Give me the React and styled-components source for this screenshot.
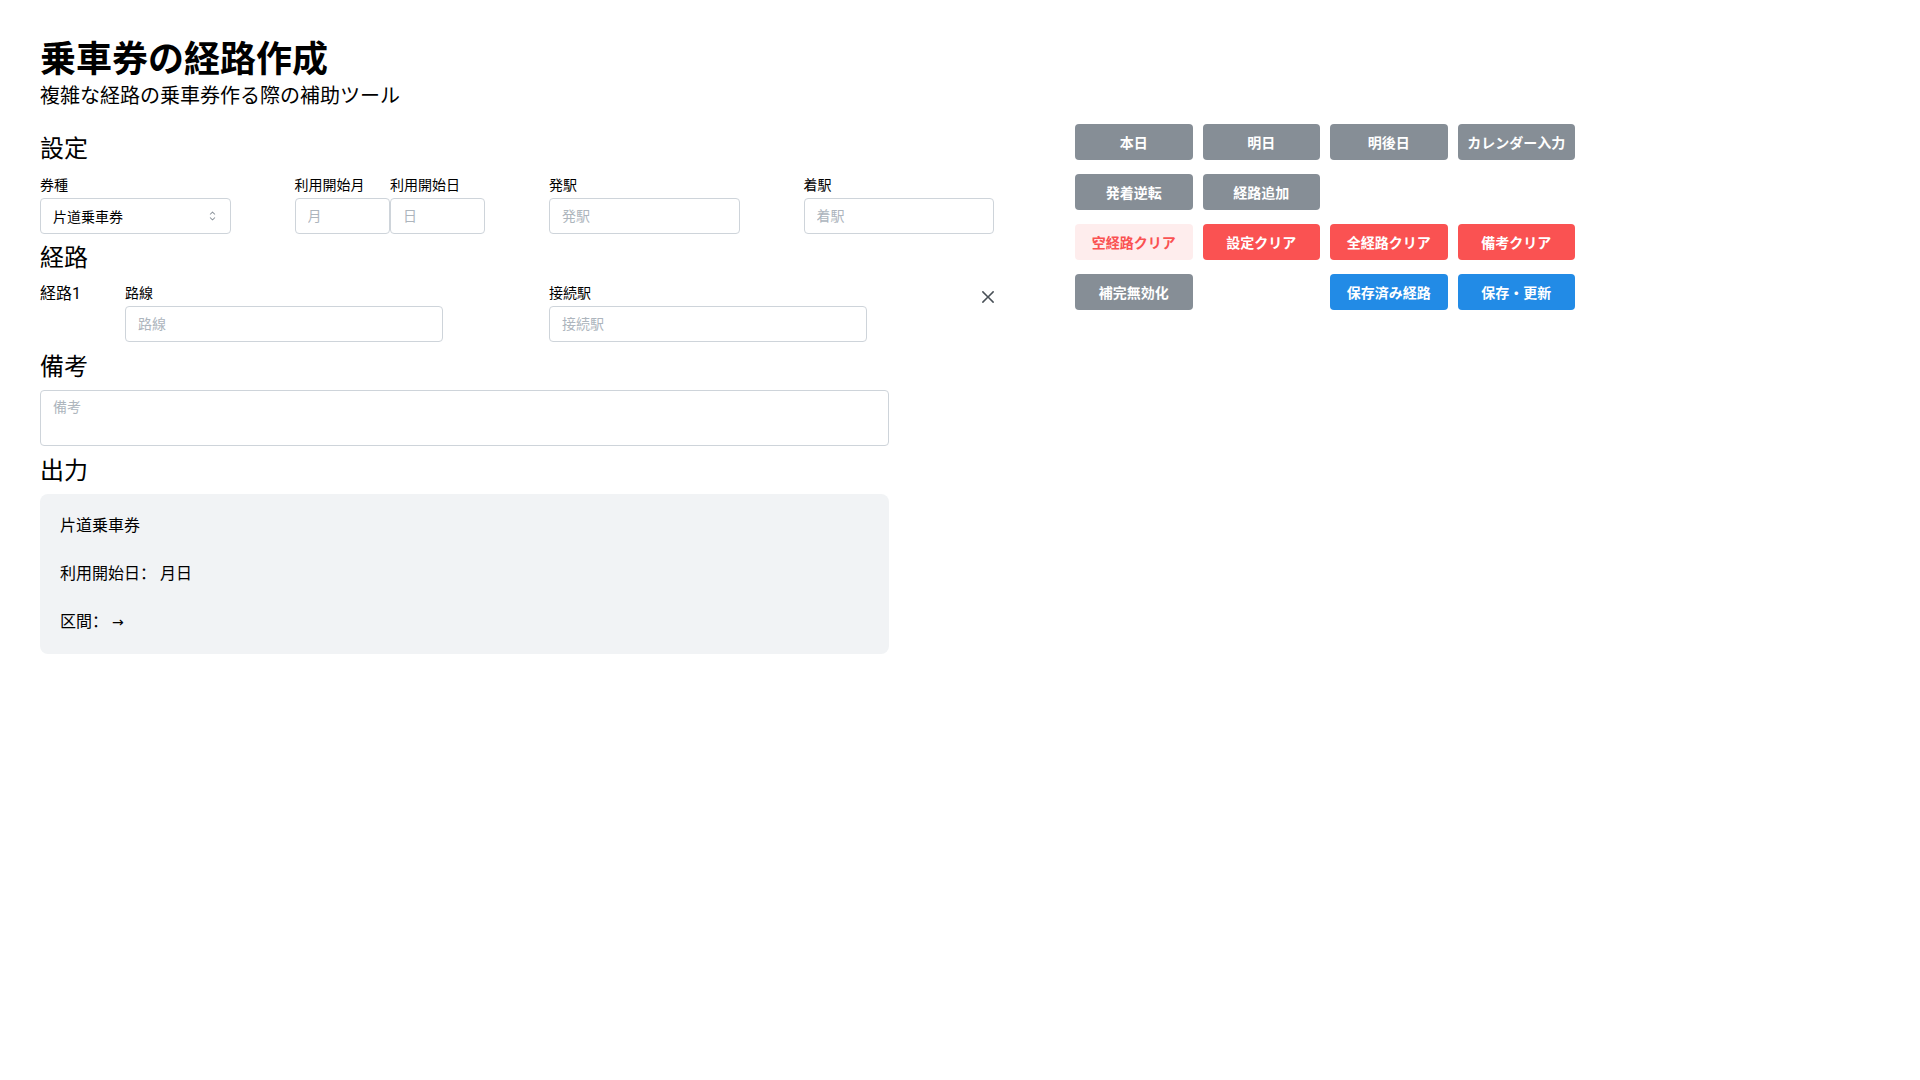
import React from "react";
import styled, { createGlobalStyle } from "styled-components";

const Global = createGlobalStyle`
  html, body { margin: 0; padding: 0; background: #fff; }
  body {
    font-family: Roboto, "Noto Sans CJK SC", "Noto Sans CJK JP", sans-serif;
    color: #000;
    -webkit-font-smoothing: antialiased;
  }
  * { box-sizing: border-box; }
`;

const Page = styled.div`
  padding: 39px 40px 40px;
`;

const Title = styled.h1`
  margin: 0;
  font-size: 36px;
  line-height: 43px;
  font-weight: 700;
`;

const Subtitle = styled.div`
  font-size: 20px;
  line-height: 28px;
`;

const Main = styled.div`
  display: flex;
  align-items: flex-start;
  margin-top: 14px;
`;

const LeftCol = styled.div`
  width: 1018px;
  flex: none;
`;

const Heading = styled.h2`
  margin: ${(p) => p.$mt || 7}px 0 ${(p) => p.$mb || 10}px;
  font-size: 24px;
  line-height: 32px;
  font-weight: 400;
`;

const SettingsGrid = styled.div`
  display: grid;
  grid-template-columns: repeat(4, 1fr);
`;

const Field = styled.div`
  width: ${(p) => p.$w || "75%"};
  display: flex;
  flex-direction: column;
`;

const DatePair = styled.div`
  width: 75%;
  display: flex;
`;

const Label = styled.label`
  font-size: 14px;
  line-height: 20px;
  font-weight: 400;
  margin-bottom: 3px;
  white-space: nowrap;
`;

const Input = styled.input`
  height: 36px;
  width: 100%;
  border: 1px solid #ced4da;
  border-radius: 4px;
  padding: 0 12px;
  font-family: inherit;
  font-size: 14px;
  color: #000;
  background: #fff;
  outline: none;
  &::placeholder { color: #adb5bd; }
`;

const SelectBox = styled.div`
  position: relative;
  height: 36px;
  border: 1px solid #ced4da;
  border-radius: 4px;
  padding: 0 36px 0 12px;
  display: flex;
  align-items: center;
  font-size: 14px;
  background: #fff;
`;

const Chevron = styled.svg`
  position: absolute;
  right: 10px;
  top: 50%;
  transform: translateY(-50%);
  width: 15px;
  height: 15px;
  color: #868e96;
`;

const RouteRow = styled.div`
  display: flex;
  align-items: flex-start;
  margin-top: 1px;
`;

const RouteName = styled.div`
  width: 85px;
  flex: none;
  font-size: 16px;
  line-height: 22px;
`;

const RouteFields = styled.div`
  width: 848px;
  flex: none;
  display: grid;
  grid-template-columns: 1fr 1fr;
`;

const CloseButton = styled.button`
  width: 28px;
  height: 28px;
  flex: none;
  margin-left: 1px;
  border: none;
  background: transparent;
  padding: 0;
  display: flex;
  align-items: center;
  justify-content: center;
  color: #495057;
  cursor: pointer;
`;

const TextArea = styled.textarea`
  display: block;
  width: 849px;
  height: 56px;
  border: 1px solid #ced4da;
  border-radius: 4px;
  padding: 6px 12px;
  font-family: inherit;
  font-size: 14px;
  line-height: 21px;
  resize: none;
  outline: none;
  &::placeholder { color: #adb5bd; }
`;

const Output = styled.div`
  width: 849px;
  background: #f1f3f5;
  border-radius: 8px;
  padding: 20px;
  display: flex;
  flex-direction: column;
  gap: 24px;
`;

const OutLine = styled.div`
  font-size: 16px;
  line-height: 24px;
`;

const Arrow = styled.span`
  font-family: "DejaVu Sans", sans-serif;
  font-size: 14px;
`;

const ButtonGrid = styled.div`
  margin-left: 17px;
  display: grid;
  grid-template-columns: repeat(4, 117.5px);
  column-gap: 10px;
  row-gap: 14px;
`;

const palette = {
  gray: { bg: "#868e96", fg: "#fff" },
  red: { bg: "#fa5252", fg: "#fff" },
  redLight: { bg: "#feeded", fg: "#fa5252" },
  blue: { bg: "#228be6", fg: "#fff" },
};

const Btn = styled.button`
  grid-column: ${(p) => p.$col || "auto"};
  height: 36px;
  border: none;
  border-radius: 4px;
  background: ${(p) => palette[p.$tone].bg};
  color: ${(p) => palette[p.$tone].fg};
  font-family: inherit;
  font-size: 14px;
  font-weight: 600;
  padding: 0 6px;
  white-space: nowrap;
  cursor: pointer;
`;

export default function App() {
  return (
    <>
      <Global />
      <Page>
        <Title>乗車券の経路作成</Title>
        <Subtitle>複雑な経路の乗車券作る際の補助ツール</Subtitle>
        <Main>
          <LeftCol>
            <Heading $mt={9}>設定</Heading>
            <SettingsGrid>
              <Field>
                <Label>券種</Label>
                <SelectBox>
                  片道乗車券
                  <Chevron viewBox="0 0 15 15" fill="currentColor">
                    <path d="M4.93179 5.43179C4.75605 5.60753 4.75605 5.89245 4.93179 6.06819C5.10753 6.24392 5.39245 6.24392 5.56819 6.06819L7.49999 4.13638L9.43179 6.06819C9.60753 6.24392 9.89245 6.24392 10.0682 6.06819C10.2439 5.89245 10.2439 5.60753 10.0682 5.43179L7.81819 3.18179C7.73379 3.0974 7.61933 3.04999 7.49999 3.04999C7.38064 3.04999 7.26618 3.0974 7.18179 3.18179L4.93179 5.43179ZM10.0682 9.56819C10.2439 9.39245 10.2439 9.10753 10.0682 8.93179C9.89245 8.75606 9.60753 8.75606 9.43179 8.93179L7.49999 10.8636L5.56819 8.93179C5.39245 8.75606 5.10753 8.75606 4.93179 8.93179C4.75605 9.10753 4.75605 9.39245 4.93179 9.56819L7.18179 11.8182C7.26618 11.9026 7.38064 11.95 7.49999 11.95C7.61933 11.95 7.73379 11.9026 7.81819 11.8182L10.0682 9.56819Z" />
                  </Chevron>
                </SelectBox>
              </Field>
              <DatePair>
                <Field $w="50%">
                  <Label>利用開始月</Label>
                  <Input placeholder="月" />
                </Field>
                <Field $w="50%">
                  <Label>利用開始日</Label>
                  <Input placeholder="日" />
                </Field>
              </DatePair>
              <Field>
                <Label>発駅</Label>
                <Input placeholder="発駅" />
              </Field>
              <Field>
                <Label>着駅</Label>
                <Input placeholder="着駅" />
              </Field>
            </SettingsGrid>

            <Heading $mt={8} $mb={9}>経路</Heading>
            <RouteRow>
              <RouteName>経路1</RouteName>
              <RouteFields>
                <Field>
                  <Label>路線</Label>
                  <Input placeholder="路線" />
                </Field>
                <Field>
                  <Label>接続駅</Label>
                  <Input placeholder="接続駅" />
                </Field>
              </RouteFields>
              <CloseButton aria-label="削除">
                <svg width="20" height="20" viewBox="0 0 15 15" fill="currentColor">
                  <path d="M11.7816 4.03157C12.0062 3.80702 12.0062 3.44295 11.7816 3.2184C11.5571 2.99385 11.193 2.99385 10.9685 3.2184L7.50005 6.68682L4.03164 3.2184C3.80708 2.99385 3.44301 2.99385 3.21846 3.2184C2.99391 3.44295 2.99391 3.80702 3.21846 4.03157L6.68688 7.49999L3.21846 10.9684C2.99391 11.193 2.99391 11.557 3.21846 11.7816C3.44301 12.0061 3.80708 12.0061 4.03164 11.7816L7.50005 8.31316L10.9685 11.7816C11.193 12.0061 11.5571 12.0061 11.7816 11.7816C12.0062 11.557 12.0062 11.193 11.7816 10.9684L8.31322 7.49999L11.7816 4.03157Z" />
                </svg>
              </CloseButton>
            </RouteRow>

            <Heading $mt={9} $mb={7}>備考</Heading>
            <TextArea placeholder="備考" />

            <Heading $mt={9} $mb={7}>出力</Heading>
            <Output>
              <OutLine>片道乗車券</OutLine>
              <OutLine>利用開始日： 月日</OutLine>
              <OutLine>
                区間： <Arrow>→</Arrow>
              </OutLine>
            </Output>
          </LeftCol>

          <ButtonGrid>
            <Btn $tone="gray">本日</Btn>
            <Btn $tone="gray">明日</Btn>
            <Btn $tone="gray">明後日</Btn>
            <Btn $tone="gray">カレンダー入力</Btn>
            <Btn $tone="gray" $col="1">発着逆転</Btn>
            <Btn $tone="gray">経路追加</Btn>
            <Btn $tone="redLight" $col="1">空経路クリア</Btn>
            <Btn $tone="red">設定クリア</Btn>
            <Btn $tone="red">全経路クリア</Btn>
            <Btn $tone="red">備考クリア</Btn>
            <Btn $tone="gray" $col="1">補完無効化</Btn>
            <Btn $tone="blue" $col="3">保存済み経路</Btn>
            <Btn $tone="blue">保存・更新</Btn>
          </ButtonGrid>
        </Main>
      </Page>
    </>
  );
}
